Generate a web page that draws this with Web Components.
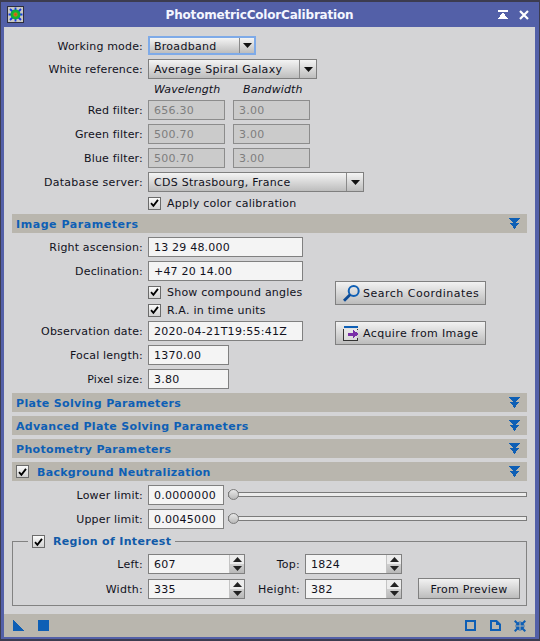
<!DOCTYPE html>
<html><head><meta charset="utf-8"><title>PhotometricColorCalibration</title>
<style>
html,body{margin:0;padding:0;height:100%;background:#3c3c50}
body{font:11px "DejaVu Sans",sans-serif;color:#11111c;letter-spacing:.27px}
</style></head><body>
<pi-window title-text="PhotometricColorCalibration">
  <pi-row label="Working mode:"><pi-combo focused style="width:108px;height:19px">Broadband</pi-combo></pi-row>
  <pi-row label="White reference:"><pi-combo style="width:169px;letter-spacing:.32px">Average Spiral Galaxy</pi-combo></pi-row>
  <pi-row compact><pi-col-heads></pi-col-heads></pi-row>
  <pi-row label="Red filter:"><pi-field disabled style="width:77px">656.30</pi-field><pi-field disabled style="width:77px">3.00</pi-field></pi-row>
  <pi-row label="Green filter:"><pi-field disabled style="width:77px">500.70</pi-field><pi-field disabled style="width:77px">3.00</pi-field></pi-row>
  <pi-row label="Blue filter:"><pi-field disabled style="width:77px">500.70</pi-field><pi-field disabled style="width:77px">3.00</pi-field></pi-row>
  <pi-row label="Database server:" style="--label-ls:.3px"><pi-combo style="width:216px">CDS Strasbourg, France</pi-combo></pi-row>
  <pi-row compact><pi-check>Apply color calibration</pi-check></pi-row>

  <pi-section style="letter-spacing:.55px">Image Parameters</pi-section>
  <pi-split>
    <pi-row label="Right ascension:"><pi-field style="width:155px;letter-spacing:.2px">13 29 48.000</pi-field></pi-row>
    <pi-row label="Declination:"><pi-field style="width:155px;letter-spacing:.2px">+47 20 14.00</pi-field></pi-row>
    <pi-row compact><pi-check style="letter-spacing:.22px">Show compound angles</pi-check></pi-row>
    <pi-row compact><pi-check>R.A. in time units</pi-check></pi-row>
    <pi-row label="Observation date:"><pi-field style="width:155px">2020-04-21T19:55:41Z</pi-field></pi-row>
    <pi-row label="Focal length:"><pi-field style="width:81px">1370.00</pi-field></pi-row>
    <pi-row label="Pixel size:"><pi-field style="width:81px">3.80</pi-field></pi-row>
    <pi-button slot="side" icon="search" style="width:151px;height:24px;letter-spacing:.5px">Search Coordinates</pi-button>
    <pi-button slot="side" icon="acquire" style="width:151px;height:24px;letter-spacing:.38px">Acquire from Image</pi-button>
  </pi-split>

  <pi-section>Plate Solving Parameters</pi-section>
  <pi-section>Advanced Plate Solving Parameters</pi-section>
  <pi-section>Photometry Parameters</pi-section>
  <pi-section checkable style="letter-spacing:.3px">Background Neutralization</pi-section>
  <pi-row label="Lower limit:"><pi-field style="width:76px">0.0000000</pi-field><pi-slider></pi-slider></pi-row>
  <pi-row label="Upper limit:"><pi-field style="width:76px">0.0045000</pi-field><pi-slider></pi-slider></pi-row>

  <pi-group legend="Region of Interest">
    <pi-cell>Left:</pi-cell><pi-spin>607</pi-spin><pi-cell>Top:</pi-cell><pi-spin>1824</pi-spin><span></span>
    <pi-cell>Width:</pi-cell><pi-spin>335</pi-spin><pi-cell>Height:</pi-cell><pi-spin>382</pi-spin>
    <pi-button style="width:102px;height:21px;margin-left:11px">From Preview</pi-button>
  </pi-group>
</pi-window>

<script>
const BLUE = '#0e5fb5';
function def(name, html, init){
  customElements.define(name, class extends HTMLElement{
    constructor(){super();this.attachShadow({mode:'open'}).innerHTML=html;}
    connectedCallback(){ if(init) init(this); }
  });
}
const CHECK = `<svg width="12" height="12" viewBox="0 0 12 12"><path d="M2.2 6.2 L4.8 9 L9.8 2.6" fill="none" stroke="#000" stroke-width="2"/></svg>`;
const CHECKBOX_CSS = `.box{box-sizing:border-box;width:13px;height:13px;border:1px solid #6b6b6b;background:linear-gradient(#fafafa,#d2d2d2);display:flex;align-items:center;justify-content:center;flex:none}`;

def('pi-window', `<style>
:host{display:flex;flex-direction:column;box-sizing:border-box;height:641px;width:540px;background:#3c3c50;padding:2px 1px 2px 1px}
.frame{flex:1;display:flex;flex-direction:column;background:#5360a8;padding:0 4px 2px 3px;min-height:0}
.title{height:25px;flex:none;display:flex;align-items:center;color:#fff;position:relative}
.app{box-sizing:border-box;width:17px;height:17px;margin:0 0 0 3px;background:#c8c8c4;border:1px solid #2e2e3c;display:flex}
.name{flex:1;text-align:center;font:bold 12px "DejaVu Sans",sans-serif;letter-spacing:-.18px;color:#f4f6ff;margin-left:-3px}
.tools{display:flex;gap:11px;margin-right:6px;align-items:center}
.body{flex:1;background:#d4d4d6;display:flex;flex-direction:column;gap:4px;padding:9px 8px 8px 8px;min-height:0}
.foot{height:23px;flex:none;background:#b9b6ae;display:flex;align-items:center;padding:0 9px}
.foot svg{display:block}
.sp{flex:1}
</style>
<div class="frame">
<div class="title">
 <div class="app"><svg width="15" height="15" viewBox="0 0 15 15"><defs><radialGradient id="g"><stop offset="0" stop-color="#e0401a"/><stop offset=".3" stop-color="#b8801a"/><stop offset=".55" stop-color="#14b82e"/><stop offset="1" stop-color="#0ea83c"/></radialGradient></defs>
 <path d="M7.5 0.5V14.5M0.5 7.5H14.5M2 2L13 13M13 2L2 13" stroke="#1438e8" stroke-width="1.8"/><circle cx="7.5" cy="7.5" r="5" fill="url(#g)"/></svg></div>
 <div class="name"></div>
 <div class="tools">
  <svg width="10" height="9" viewBox="0 0 10 9" shape-rendering="crispEdges"><path d="M0 0H10V2H0ZM5 2L10 9H0Z" fill="#fff"/></svg>
  <svg width="10" height="10" viewBox="0 0 10 10"><path d="M1 1L9 9M9 1L1 9" stroke="#fff" stroke-width="2.2"/></svg>
 </div>
</div>
<div class="body"><slot></slot></div>
<div class="foot">
 <svg width="11" height="11" viewBox="0 0 11 11" shape-rendering="crispEdges"><path d="M0 0L11 11H0Z" fill="${BLUE}"/></svg>
 <svg style="margin-left:14px" width="11" height="11" viewBox="0 0 11 11" shape-rendering="crispEdges"><rect width="11" height="11" fill="${BLUE}"/></svg>
 <div class="sp"></div>
 <svg width="11" height="11" viewBox="0 0 11 11" shape-rendering="crispEdges"><path d="M0 0H11V11H0ZM2 2V9H9V2Z" fill-rule="evenodd" fill="${BLUE}"/></svg>
 <svg style="margin-left:14px" width="11" height="11" viewBox="0 0 11 11"><path d="M1 1H6.5L10 4.5V10H1Z" fill="none" stroke="${BLUE}" stroke-width="2"/><path d="M6 0.5V5H10.5Z" fill="${BLUE}"/></svg>
 <svg style="margin-left:13px" width="12" height="12" viewBox="0 0 12 12"><path d="M0.7 0.7L4 4M11.3 0.7L8 4M0.7 11.3L4 8M11.3 11.3L8 8" stroke="${BLUE}" stroke-width="2"/><path d="M5.5 1V5.5H1ZM6.5 1V5.5H11ZM5.5 11V6.5H1ZM6.5 11V6.5H11Z" fill="${BLUE}"/></svg>
</div>
</div>`, el=>{ el.shadowRoot.querySelector('.name').textContent = el.getAttribute('title-text'); });

def('pi-row', `<style>
:host{display:flex;align-items:center;gap:5px;height:20px;flex:none;white-space:nowrap}
:host([compact]){height:14px}
.l{width:131px;text-align:right;flex:none;padding-top:1px;letter-spacing:var(--label-ls,.17px)}
.c{display:flex;align-items:center;gap:8px;flex:1;min-width:0}
</style><span class="l"></span><div class="c"><slot></slot></div>`, el=>{
  el.shadowRoot.querySelector('.l').textContent = el.getAttribute('label')||'';
  if(el.querySelector('pi-col-heads')) el.style.height='13px';
  const fh=el.firstElementChild; if(fh&&fh.hasAttribute('focused')) el.style.height='19px';
});

def('pi-col-heads', `<style>
:host{display:flex;font-style:italic;gap:8px;letter-spacing:.1px}
span{width:77px;box-sizing:border-box;padding-left:6px;white-space:nowrap}
</style><span>Wavelength</span><span style="padding-left:10px">Bandwidth</span>`);

def('pi-combo', `<style>
:host{display:flex;box-sizing:border-box;height:20px;border:1px solid #7f7f7f;background:linear-gradient(#f4f4f4,#bdbdbd);align-items:center;flex:none}
:host([focused]){border:2px solid #7eaae8}
.t{flex:1;padding-left:5px;padding-top:1px}
:host([focused]) .t{padding-left:4px}
.a{flex:none;width:17px;height:100%;border-left:1px solid #8a8a8a;display:flex;align-items:center;justify-content:center;box-sizing:border-box}
:host([focused]) .a{width:15px}
</style><span class="t"><slot></slot></span><span class="a"><svg width="9" height="5" viewBox="0 0 9 5"><path d="M0 0H9L4.5 5Z" fill="#111"/></svg></span>`);

def('pi-field', `<style>
:host{display:flex;box-sizing:border-box;height:20px;border:1px solid #808080;background:#f4f4f4;align-items:center;padding-left:5px;padding-top:1px;flex:none}
:host([disabled]){background:#cbcbcb;color:#7e7e7e;border-color:#8c8c8c}
</style><slot></slot>`);

def('pi-check', `<style>
:host{display:flex;align-items:center;gap:6px;height:14px}
.t{padding-top:1px}
${CHECKBOX_CSS}
</style><span class="box">${CHECK}</span><span class="t"><slot></slot></span>`);

def('pi-section', `<style>
:host{display:flex;align-items:center;height:19px;background:#b9b6ae;padding:0 7px 0 4px;color:${BLUE};font-weight:bold;flex:none;white-space:nowrap;letter-spacing:.33px}
${CHECKBOX_CSS}
.box{color:#000;margin-right:8px;display:none}
:host([checkable]) .box{display:flex}
.t{flex:1;padding-top:1px}
svg.m{display:block}
</style><span class="box">${CHECK}</span><span class="t"><slot></slot></span>
<svg class="m" width="11" height="11" viewBox="0 0 11 11" shape-rendering="crispEdges"><path d="M0 0H11L5.5 6Z" fill="${BLUE}"/><path d="M1 5H10L5.5 11Z" fill="${BLUE}"/></svg>`);

def('pi-split', `<style>
:host{display:flex;flex:none}
.l{width:295px;flex:none;display:flex;flex-direction:column;gap:4px}
.r{margin-left:28px;padding-top:44px;display:flex;flex-direction:column;gap:16px}
</style><div class="l"><slot></slot></div><div class="r"><slot name="side"></slot></div>`);

def('pi-button', `<style>
:host{display:flex;box-sizing:border-box;border:1px solid #808080;background:linear-gradient(#f2f2f2,#bcbcbc);align-items:center;justify-content:center;gap:3px;flex:none;white-space:nowrap}
svg{display:none;flex:none}
span{padding-top:1px}
:host([icon]){justify-content:flex-start;padding-left:7px}
</style>
<svg id="search" width="17" height="17" viewBox="0 0 17 17"><circle cx="10.7" cy="6" r="5" fill="none" stroke="${BLUE}" stroke-width="2"/><path d="M7 9.8L1 15.8" stroke="#0c4a94" stroke-width="2.8"/></svg>
<svg id="acquire" width="17" height="17" viewBox="0 0 17 17" shape-rendering="crispEdges"><path d="M1 1H15V3H1Z" fill="${BLUE}"/><path d="M0.5 3.5V15.5H14.5V13" fill="none" stroke="#333" stroke-width="1"/><path d="M14.5 3.5V5" fill="none" stroke="#333"/><path d="M1 4H14V15H1Z" fill="#f0f0f0" opacity=".5"/><path d="M5 7.5H10V5L16 9L10 13V10.5H5Z" fill="#7a2fa8"/></svg>
<span><slot></slot></span>`, el=>{
  const i=el.getAttribute('icon'); if(i) el.shadowRoot.getElementById(i).style.display='block';
});

def('pi-slider', `<style>
:host{display:block;flex:1;height:14px;position:relative;margin-left:-4px}
.t{position:absolute;left:0;right:0;top:4px;height:5px;box-sizing:border-box;border:1px solid #7b7b7b;background:#ececec}
.h{position:absolute;left:0;top:1px;width:11px;height:11px;box-sizing:border-box;border:1px solid #7b7b7b;border-radius:50%;background:linear-gradient(#e8e8e8,#b8b8b8)}
</style><div class="t"></div><div class="h"></div>`);

def('pi-group', `<style>
:host{display:block;flex:none;margin-top:2px}
fieldset{margin:0;border:1px solid #828282;padding:6px 0;display:block}
legend{margin-left:15px;padding:0 4px;display:flex;align-items:center;gap:8px;height:13px;color:#115aa8;font-weight:bold;letter-spacing:.33px}
${CHECKBOX_CSS}
.g{display:grid;grid-template-columns:130px 97px 50px 97px auto;column-gap:5px;row-gap:4px;align-items:center}
</style><fieldset><legend><span class="box">${CHECK}</span><span class="n"></span></legend><div class="g"><slot></slot></div></fieldset>`, el=>{
  el.shadowRoot.querySelector('.n').textContent = el.getAttribute('legend');
});

def('pi-cell', `<style>:host{display:block;text-align:right;white-space:nowrap;padding-top:1px}</style><slot></slot>`);

def('pi-spin', `<style>
:host{display:flex;box-sizing:border-box;height:20px;border:1px solid #808080;background:#f4f4f4;align-items:center}
.t{flex:1;padding-left:5px;padding-top:1px}
.b{width:14px;height:100%;display:flex;flex-direction:column;flex:none;border-left:1px solid #c4c4c4}
.b div{flex:1;display:flex;align-items:center;justify-content:center}
.u{background:#ececec}
.d{background:linear-gradient(#d0d0d0,#b8b8b8)}
</style><span class="t"><slot></slot></span><div class="b">
<div class="u"><svg width="9" height="5" viewBox="0 0 9 5"><path d="M0 5H9L4.5 0Z" fill="#222"/></svg></div>
<div class="d"><svg width="9" height="5" viewBox="0 0 9 5"><path d="M0 0H9L4.5 5Z" fill="#222"/></svg></div>
</div>`);
</script>
</body></html>
